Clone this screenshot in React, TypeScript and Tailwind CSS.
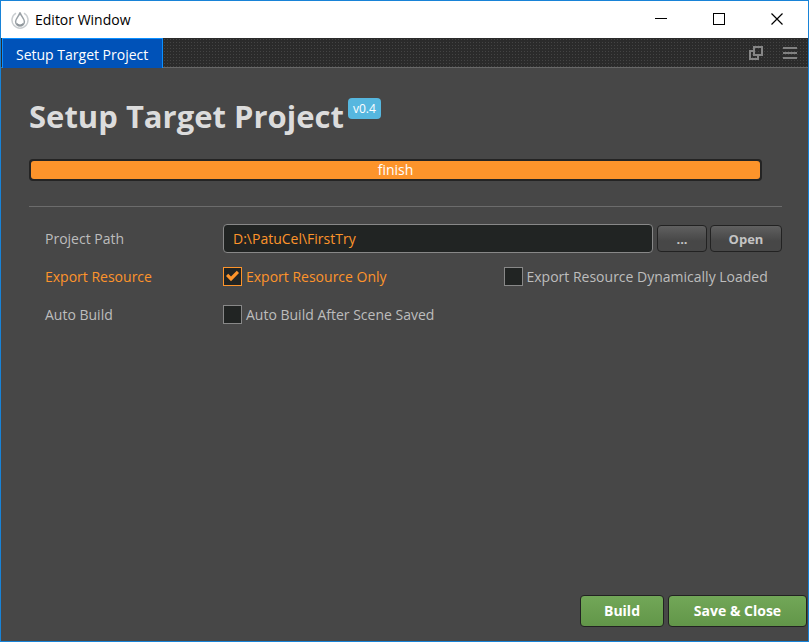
import { useState } from "react";
import type { ReactNode } from "react";

const dither =
  "bg-[#2b2b2b] bg-[radial-gradient(#444_25%,transparent_26%)] bg-[length:3px_3px]";

function WindowButton({ label, children }: { label: string; children: ReactNode }) {
  return (
    <button type="button" aria-label={label} className="flex h-full w-[58px] items-center justify-center">
      <svg width="13" height="13" viewBox="0 0 13 13" fill="none" stroke="#000" shapeRendering="crispEdges">
        {children}
      </svg>
    </button>
  );
}

function TitleBar() {
  return (
    <header className="flex h-[37px] shrink-0 items-center bg-white pr-[2px] pl-[10px]">
      <svg width="18" height="18" viewBox="0 0 18 18" fill="none">
        <path d="M5 2.200A8 8 0 1 0 13 2.200" stroke="#c9cdd0" strokeWidth="1.500" />
        <path
          d="M9 1.500C8.200 5 4.600 7.400 4.600 10.600a4.400 4.400 0 0 0 8.800 0C13.400 7.400 9.800 5 9 1.500Z"
          fill="#fff"
          stroke="#9aa1a6"
          strokeWidth="1.500"
        />
        <path d="M6 12.500a3.600 3.600 0 0 0 6 0" stroke="#7d858b" strokeWidth="1.200" />
      </svg>
      <span className="ml-[6px] flex-1 text-[14px] text-black">Editor Window</span>
      <div className="flex h-full">
        <WindowButton label="Minimize">
          <path d="M0 5.500h12" />
        </WindowButton>
        <WindowButton label="Maximize">
          <rect x="0.500" y="0.500" width="11" height="11" />
        </WindowButton>
        <WindowButton label="Close">
          <path d="M0.500 0.500l11 11M11.500 0.500l-11 11" shapeRendering="auto" strokeWidth="1.200" />
        </WindowButton>
      </div>
    </header>
  );
}

function TabBar() {
  return (
    <nav className={`flex h-[30px] shrink-0 border-b border-[#686868] ${dither}`}>
      <button
        type="button"
        className="-mb-px ml-px border border-b-0 border-[#0b8fff] bg-[#0052b8] pt-[2px] pr-[14px] pl-[13px] text-[14px] text-white"
      >
        Setup Target Project
      </button>
      <div className="ml-auto flex items-center gap-5 pr-[11px]">
        <button type="button" aria-label="Pop out">
          <svg width="14" height="14" viewBox="0 0 14 14" fill="none" stroke="#858585" strokeWidth="2">
            <rect x="5" y="1" width="8" height="8" />
            <path d="M5 5H1v8h8V9" />
          </svg>
        </button>
        <button type="button" aria-label="Menu">
          <svg width="14" height="12" viewBox="0 0 14 12" stroke="#808080" strokeWidth="2">
            <path d="M0 1h14M0 6h14M0 11h14" />
          </svg>
        </button>
      </div>
    </nav>
  );
}

function Row({ label, htmlFor, active, children }: { label: string; htmlFor: string; active?: boolean; children: ReactNode }) {
  return (
    <div className="flex h-[29px] items-center">
      <label htmlFor={htmlFor} className={`w-[178px] shrink-0 ${active ? "text-[#fd942b]" : "text-[#bdbdbd]"}`}>
        {label}
      </label>
      {children}
    </div>
  );
}

function Check({ id, label, initial = false }: { id: string; label: string; initial?: boolean }) {
  const [on, setOn] = useState(initial);
  return (
    <label htmlFor={id} className={`flex items-center gap-1 whitespace-nowrap ${on ? "text-[#fd942b]" : "text-[#bdbdbd]"}`}>
      <span className="grid size-[19px]">
        <input
          id={id}
          type="checkbox"
          checked={on}
          onChange={(e) => setOn(e.target.checked)}
          className="col-start-1 row-start-1 size-[19px] appearance-none border border-[#888] bg-[#212423] checked:border-[#fd942b]"
        />
        {on && (
          <svg className="pointer-events-none col-start-1 row-start-1" width="19" height="19" viewBox="0 0 19 19">
            <path d="M3 9l2.200-2.200 2.800 2.800 5.800-5.800L16 6 8 14.200Z" fill="#fd942b" />
          </svg>
        )}
      </span>
      {label}
    </label>
  );
}

const greyButton =
  "h-[27px] rounded border border-[#222] bg-linear-to-b from-[#606060] to-[#474747] to-60% text-[13px] font-bold text-[#c4c4c4]";
const greenButton =
  "h-8 rounded border border-[#222] bg-linear-to-b from-[#72a758] to-[#629649] text-[14px] font-bold text-white";

export default function App() {
  const [path, setPath] = useState("D:\\PatuCel\\FirstTry");
  return (
    <div className="flex min-h-screen flex-col border border-[#1883d7] bg-[#474747] font-['Open_Sans','Noto_Sans',sans-serif] text-[14px] leading-5">
      <TitleBar />
      <TabBar />
      <main className="flex flex-1 flex-col pr-[26px] pl-7">
        <div className="mt-7 flex items-start gap-1">
          <h1 className="text-[31px] leading-10 font-bold text-[#dcdcdc]">Setup Target Project</h1>
          <span className="mt-[2px] rounded bg-[#56b7df] px-[5px] text-[12px] leading-[21px] text-white">v0.4</span>
        </div>
        <div
          role="progressbar"
          aria-valuenow={100}
          aria-label="Build progress"
          className="mt-[23px] mr-5 rounded bg-[#242424] p-[2px]"
        >
          <div className="rounded-[3px] bg-[#fd942b] text-center leading-[18px] text-white">finish</div>
        </div>
        <hr className="mt-[25px] border-[#6c6c6c]" />
        <form className="mt-[17px] flex flex-col gap-[9px] pl-4" onSubmit={(e) => e.preventDefault()}>
          <Row label="Project Path" htmlFor="path">
            <input
              id="path"
              value={path}
              onChange={(e) => setPath(e.target.value)}
              className="h-[29px] min-w-0 flex-1 rounded border border-[#888] bg-[#212423] px-[9px] text-[#fd942b]"
            />
            <button type="button" className={`ml-1 w-[50px] ${greyButton}`}>
              ...
            </button>
            <button type="button" className={`ml-[3px] w-[72px] ${greyButton}`}>
              Open
            </button>
          </Row>
          <Row label="Export Resource" htmlFor="only" active>
            <div className="grid flex-1 grid-cols-2 gap-x-[2px]">
              <Check id="only" label="Export Resource Only" initial />
              <Check id="dynamic" label="Export Resource Dynamically Loaded" />
            </div>
          </Row>
          <Row label="Auto Build" htmlFor="auto">
            <Check id="auto" label="Auto Build After Scene Saved" />
          </Row>
        </form>
      </main>
      <footer className="flex justify-end gap-1 pr-px pb-[14px]">
        <button type="button" className={`w-[84px] ${greenButton}`}>
          Build
        </button>
        <button type="button" className={`w-[139px] ${greenButton}`}>
          Save &amp; Close
        </button>
      </footer>
    </div>
  );
}
